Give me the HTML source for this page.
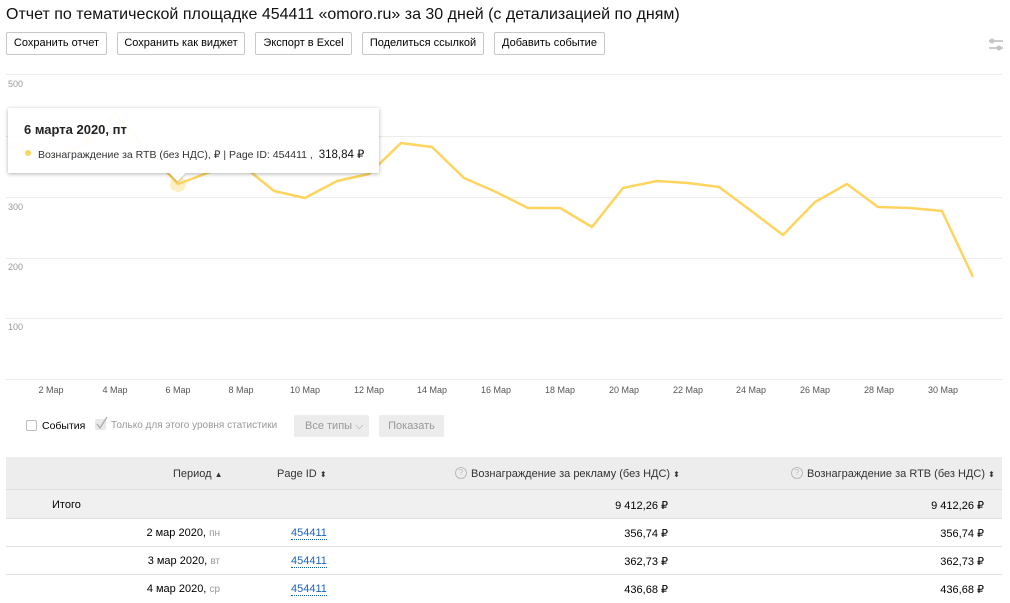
<!DOCTYPE html>
<html><head><meta charset="utf-8"><style>
*{box-sizing:border-box;margin:0;padding:0}
body{width:1010px;height:597px;overflow:hidden;background:#fff;font-family:"Liberation Sans",Arial,sans-serif;color:#000;position:relative}
.a{position:absolute;white-space:nowrap}
.btn{position:absolute;top:32px;height:23px;border:1px solid #c8c8c8;border-radius:2px;font-size:11px;line-height:21px;text-align:center;color:#000;background:#fff}
.ax{position:absolute;top:385px;font-size:9px;color:#555;width:40px;text-align:center}
.yl{position:absolute;left:8px;font-size:9px;color:#999}
.row{position:absolute;left:6px;width:996px;height:28px;border-bottom:1px solid #e0e0e0;font-size:11px}
.row span{position:absolute;top:8px}
.link{color:#1a63b8;border-bottom:1px dotted #1a63b8;line-height:12px}
.sa{font-size:8px}
</style></head><body>
<div class="a" style="left:6px;top:6px;font-size:16px;color:#111">Отчет по тематической площадке 454411 «omoro.ru» за 30 дней (с детализацией по дням)</div>
<div class="btn" style="left:6px;width:101px">Сохранить отчет</div>
<div class="btn" style="left:117px;width:128px">Сохранить как виджет</div>
<div class="btn" style="left:255px;width:97px">Экспорт в Excel</div>
<div class="btn" style="left:362px;width:122px">Поделиться ссылкой</div>
<div class="btn" style="left:494px;width:111px">Добавить событие</div>
<svg class="a" style="left:988px;top:38px" width="16" height="14"><line x1="1" y1="3" x2="15" y2="3" stroke="#ccc" stroke-width="2"/><circle cx="4" cy="3" r="2.5" fill="#c4c4c4"/><line x1="1" y1="10" x2="15" y2="10" stroke="#ccc" stroke-width="2"/><circle cx="11" cy="10" r="2.5" fill="#c4c4c4"/></svg>

<svg class="a" style="left:0;top:0" width="1010" height="400">
<g stroke="#ececec" stroke-width="1">
<line x1="6" y1="74.5" x2="1002" y2="74.5"/><line x1="6" y1="136.5" x2="1002" y2="136.5"/><line x1="6" y1="197.5" x2="1002" y2="197.5"/><line x1="6" y1="258.5" x2="1002" y2="258.5"/><line x1="6" y1="318.5" x2="1002" y2="318.5"/><line x1="6" y1="379.5" x2="1002" y2="379.5"/>
</g>
<circle cx="178" cy="184" r="8" fill="#fdefc4"/>
<polyline fill="none" stroke="#fdd55e" stroke-width="2.5" stroke-linejoin="round" points="51,160 83,145 115,113 146,150 178,184 210,172 242,165 274,191 305,198 337,181 369,174 401,143 432,147 464,178 496,192 528,208 560,208 592,227 623,188 657,181 688,183 719,187 750,210 783,235 815,202 847,184 878,207 910,208 942,211 973,277"/>
</svg>
<div class="yl" style="top:79px">500</div>
<div class="yl" style="top:141px">400</div>
<div class="yl" style="top:202px">300</div>
<div class="yl" style="top:262px">200</div>
<div class="yl" style="top:322px">100</div>

<div class="a" style="left:8px;top:108px;width:371px;height:65px;background:rgba(255,255,255,0.94);box-shadow:0 1px 4px rgba(0,0,0,0.3);"></div>
<div class="a" style="left:172px;top:168px;width:11px;height:11px;background:rgba(255,255,255,0.94);transform:rotate(45deg);box-shadow:1px 1px 2px rgba(0,0,0,0.2)"></div>
<div class="a" style="left:8px;top:160px;width:371px;height:13px;background:#fff"></div>
<div class="a" style="left:24px;top:122px;font-size:13px;font-weight:bold;color:#222">6 марта 2020, пт</div>
<div class="a" style="left:25px;top:150px;width:6px;height:6px;border-radius:50%;background:#fdd55e"></div>
<div class="a" style="left:38px;top:147px;font-size:10.5px;color:#333">Вознаграждение за RTB (без НДС), ₽ | Page ID: 454411 ,&nbsp; <span style="font-size:11.5px;color:#111">318,84 ₽</span></div>

<div class="ax" style="left:31px">2 Мар</div><div class="ax" style="left:95px">4 Мар</div><div class="ax" style="left:158px">6 Мар</div><div class="ax" style="left:221px">8 Мар</div><div class="ax" style="left:285px">10 Мар</div><div class="ax" style="left:349px">12 Мар</div><div class="ax" style="left:412px">14 Мар</div><div class="ax" style="left:476px">16 Мар</div><div class="ax" style="left:540px">18 Мар</div><div class="ax" style="left:604px">20 Мар</div><div class="ax" style="left:668px">22 Мар</div><div class="ax" style="left:731px">24 Мар</div><div class="ax" style="left:795px">26 Мар</div><div class="ax" style="left:859px">28 Мар</div><div class="ax" style="left:923px">30 Мар</div>

<div class="a" style="left:26px;top:420px;width:11px;height:11px;border:1px solid #bbb;border-radius:2px"></div>
<div class="a" style="left:42px;top:420px;font-size:10.5px">События</div>
<div class="a" style="left:95px;top:419px;width:11px;height:11px;background:#e8e8e8;border-radius:2px"></div>
<svg class="a" style="left:95px;top:415px" width="14" height="16"><path d="M2 9 L5 13 L12 2" fill="none" stroke="#aaa" stroke-width="1.3"/></svg>
<div class="a" style="left:111px;top:420px;font-size:10px;color:#999">Только для этого уровня статистики</div>
<div class="a" style="left:294px;top:415px;width:75px;height:22px;background:#ececec;border-radius:2px;font-size:11px;color:#999;line-height:22px;padding-left:11px">Все типы ⌵</div>
<div class="a" style="left:379px;top:415px;width:65px;height:22px;background:#ececec;border-radius:2px;font-size:11px;color:#999;line-height:22px;text-align:center">Показать</div>

<div class="a" style="left:6px;top:457px;width:996px;height:33px;background:#ededed;border-bottom:1px solid #ddd;font-size:11px;color:#333">
<span class="a" style="left:167px;top:11px">Период <span class="sa">▲</span></span>
<span class="a" style="left:271px;top:11px">Page ID <span class="sa">⬍</span></span>
<span class="a" style="left:449px;top:10px;width:12px;height:12px;border:1px solid #bbb;border-radius:50%;font-size:8px;color:#bbb;text-align:center;line-height:10px">?</span>
<span class="a" style="left:465px;top:11px">Вознаграждение за рекламу (без НДС) <span class="sa">⬍</span></span>
<span class="a" style="left:785px;top:10px;width:12px;height:12px;border:1px solid #bbb;border-radius:50%;font-size:8px;color:#bbb;text-align:center;line-height:10px">?</span>
<span class="a" style="left:801px;top:11px">Вознаграждение за RTB (без НДС) <span class="sa">⬍</span></span>
</div>
<div class="row" style="top:490px;height:29px;background:#f0f0f0;border-bottom:1px solid #ddd"><span style="left:46px;top:9px">Итого</span><span style="right:334px;top:9px">9 412,26 ₽</span><span style="right:18px;top:9px">9 412,26 ₽</span></div>
<div class="row" style="top:519px"><span style="right:782px">2 мар 2020, <i style="font-style:normal;color:#999;font-size:10px">пн</i></span><span class="link" style="left:285px">454411</span><span style="right:334px">356,74 ₽</span><span style="right:18px">356,74 ₽</span></div>
<div class="row" style="top:547px"><span style="right:782px">3 мар 2020, <i style="font-style:normal;color:#999;font-size:10px">вт</i></span><span class="link" style="left:285px">454411</span><span style="right:334px">362,73 ₽</span><span style="right:18px">362,73 ₽</span></div>
<div class="row" style="top:575px;border:none"><span style="right:782px">4 мар 2020, <i style="font-style:normal;color:#999;font-size:10px">ср</i></span><span class="link" style="left:285px">454411</span><span style="right:334px">436,68 ₽</span><span style="right:18px">436,68 ₽</span></div>
</body></html>
